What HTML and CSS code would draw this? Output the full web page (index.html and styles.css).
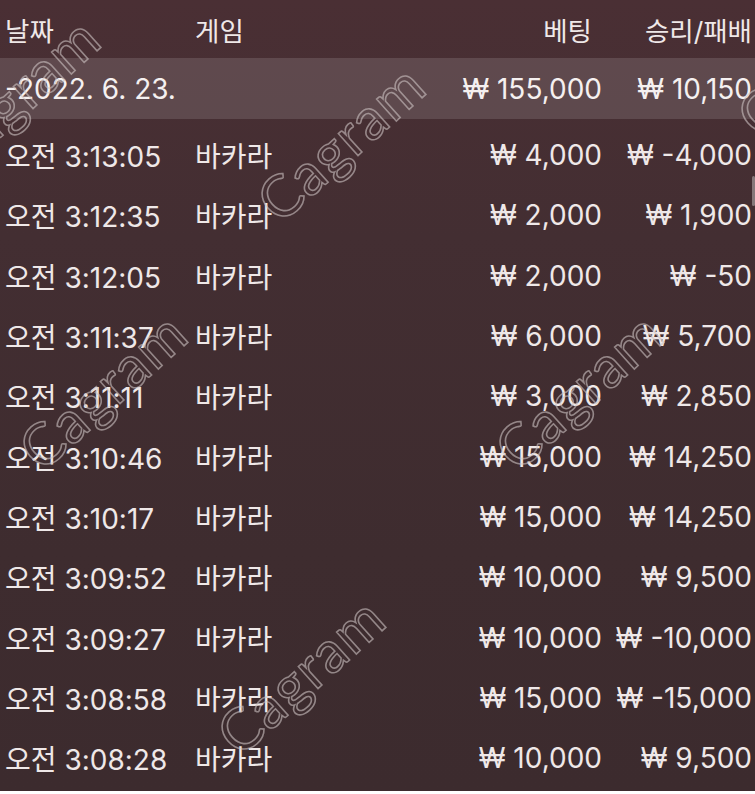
FILE: index.html
```html
<!DOCTYPE html>
<html lang="ko">
<head>
    <meta charset="UTF-8">
    <meta name="viewport" content="width=device-width, initial-scale=1.0">
    <title>베팅 내역</title>
    <link rel="stylesheet" href="styles.css">
</head>
<body>

    <div class="history">
        <div class="row header">
            <span class="date">날짜</span>
            <span class="game">게임</span>
            <span class="bet">베팅</span>
            <span class="win">승리/패배</span>
        </div>

        <div class="row day">
            <span class="date">-2022. 6. 23.</span>
            <span class="game"></span>
            <span class="bet">₩ 155,000</span>
            <span class="win">₩ 10,150</span>
        </div>

        <div class="rows">
            <div class="row"><span class="date">오전 3:13:05</span><span class="game">바카라</span><span class="bet">₩ 4,000</span><span class="win">₩ -4,000</span></div>
            <div class="row"><span class="date">오전 3:12:35</span><span class="game">바카라</span><span class="bet">₩ 2,000</span><span class="win">₩ 1,900</span></div>
            <div class="row"><span class="date">오전 3:12:05</span><span class="game">바카라</span><span class="bet">₩ 2,000</span><span class="win">₩ -50</span></div>
            <div class="row"><span class="date">오전 3:11:37</span><span class="game">바카라</span><span class="bet">₩ 6,000</span><span class="win">₩ 5,700</span></div>
            <div class="row"><span class="date">오전 3:11:11</span><span class="game">바카라</span><span class="bet">₩ 3,000</span><span class="win">₩ 2,850</span></div>
            <div class="row"><span class="date">오전 3:10:46</span><span class="game">바카라</span><span class="bet">₩ 15,000</span><span class="win">₩ 14,250</span></div>
            <div class="row"><span class="date">오전 3:10:17</span><span class="game">바카라</span><span class="bet">₩ 15,000</span><span class="win">₩ 14,250</span></div>
            <div class="row"><span class="date">오전 3:09:52</span><span class="game">바카라</span><span class="bet">₩ 10,000</span><span class="win">₩ 9,500</span></div>
            <div class="row"><span class="date">오전 3:09:27</span><span class="game">바카라</span><span class="bet">₩ 10,000</span><span class="win">₩ -10,000</span></div>
            <div class="row"><span class="date">오전 3:08:58</span><span class="game">바카라</span><span class="bet">₩ 15,000</span><span class="win">₩ -15,000</span></div>
            <div class="row"><span class="date">오전 3:08:28</span><span class="game">바카라</span><span class="bet">₩ 10,000</span><span class="win">₩ 9,500</span></div>
        </div>

        <div class="scroll-bar"></div>

        <div class="mark mark-1">Cagram</div>
        <div class="mark mark-2">Cagram</div>
        <div class="mark mark-3">Cagram</div>
        <div class="mark mark-4">Cagram</div>
        <div class="mark mark-5">Cagram</div>
        <div class="mark mark-6">Cagram</div>
    </div>

</body>
</html>
```

FILE: styles.css
```css
* {
    margin: 0;
    padding: 0;
    box-sizing: border-box;
}
body {
    font-family: 'Inter', 'Noto Sans CJK KR', sans-serif;
    background-color: #ffffff;
    width: 755px;
}
.history {
    position: relative;
    overflow: hidden;
    height: 791px;
    padding: 0 3px 0 5px;
    color: #efe8e8;
    background: linear-gradient(180deg, #4a2f34 0%, #432e32 30%, #3e2c2f 70%, #3c2b2e 100%);
}
.row {
    display: grid;
    grid-template-columns: 190px 1fr 190px 150px;
    align-items: center;
    height: 60.3px;
    font-size: 28px;
    white-space: nowrap;
}
.row .bet, .row .win {
    text-align: right;
}
.header {
    height: 58px;
    font-size: 26.5px;
}
.header .bet {
    padding-right: 10px;
}
.day {
    height: 61px;
    margin: 0 -3px 0 -5px;
    padding: 0 3px 0 5px;
    background-color: rgba(255, 255, 255, 0.13);
    color: #f5f0f0;
}
.rows {
    padding-top: 6px;
}
.scroll-bar {
    position: absolute;
    right: 0;
    top: 176px;
    width: 3px;
    height: 30px;
    border-radius: 2px;
    background-color: rgba(255, 255, 255, 0.35);
}
.mark {
    position: absolute;
    width: 300px;
    height: 70px;
    margin: -35px 0 0 -150px;
    line-height: 70px;
    text-align: center;
    font-family: 'Lato', sans-serif;
    font-size: 58px;
    letter-spacing: 1px;
    color: transparent;
    -webkit-text-stroke: 1.6px rgba(205, 195, 195, 0.6);
    transform: rotate(-42deg);
    pointer-events: none;
}
.mark-1 { left: 15px; top: 95px; }
.mark-2 { left: 340px; top: 142px; }
.mark-3 { left: 102px; top: 390px; }
.mark-4 { left: 578px; top: 390px; }
.mark-5 { left: 300px; top: 675px; }
.mark-6 { left: 820px; top: 57px; }
```
